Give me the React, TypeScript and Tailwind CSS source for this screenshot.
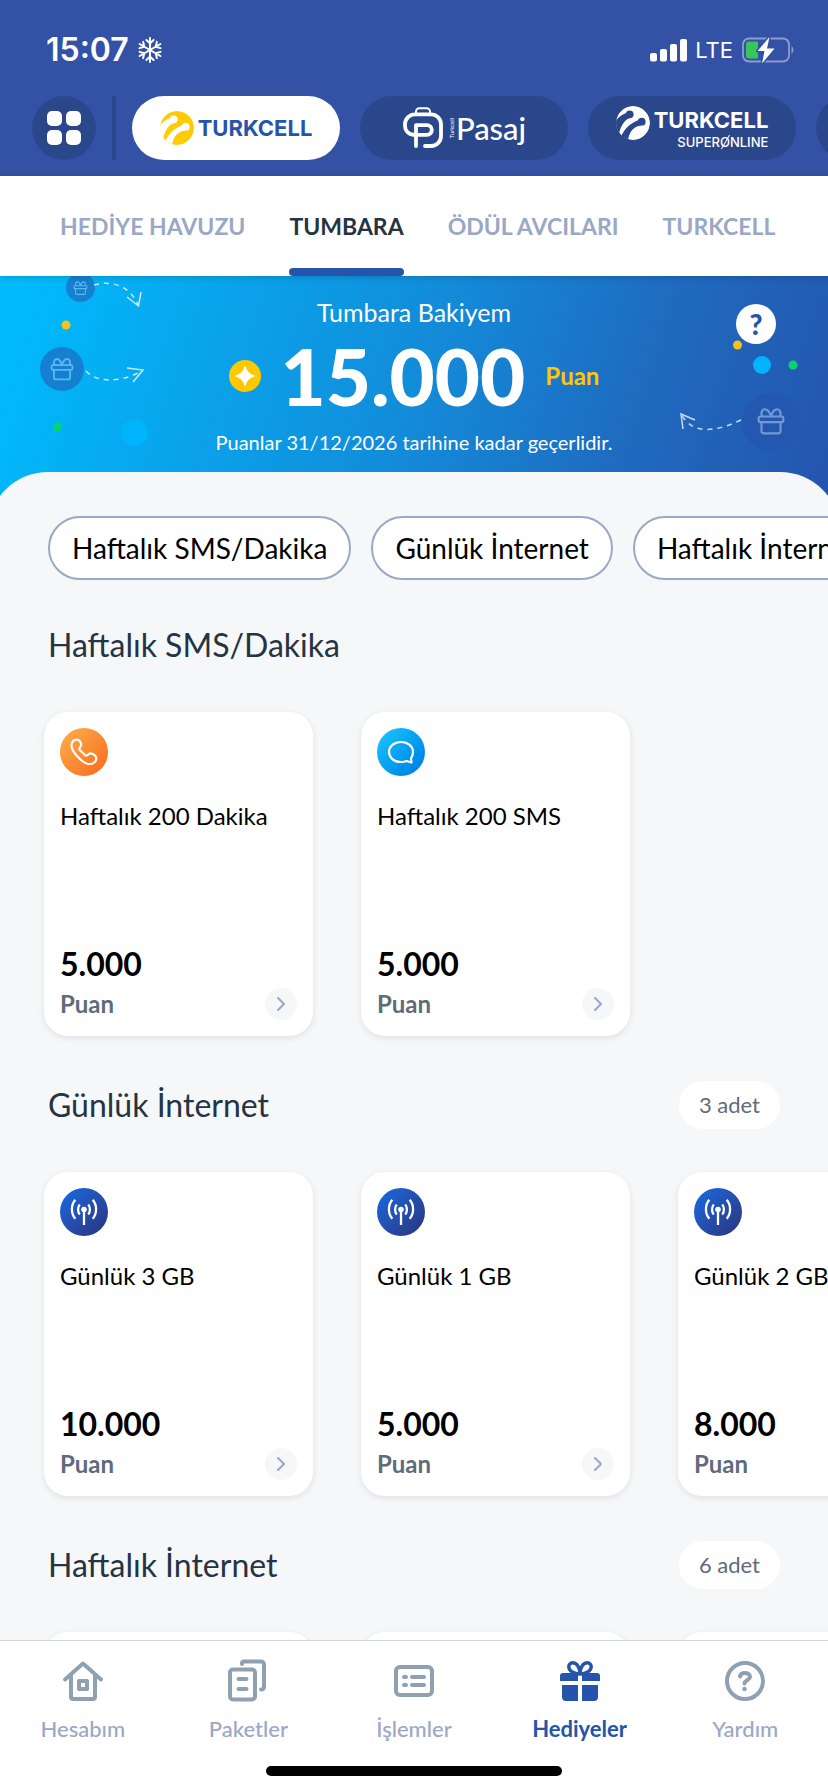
import React, { useState } from 'react';
import { ChevronRight } from 'lucide-react';

type CardIcon = 'phone' | 'sms' | 'antenna';

interface Reward {
  title: string;
  points: string;
  icon: CardIcon;
}

interface Section {
  title: string;
  count?: string;
  rewards: Reward[];
}

const tabs = ['HEDİYE HAVUZU', 'TUMBARA', 'ÖDÜL AVCILARI', 'TURKCELL'];

const filters = ['Haftalık SMS/Dakika', 'Günlük İnternet', 'Haftalık İnternet'];

const sections: Section[] = [
  {
    title: 'Haftalık SMS/Dakika',
    rewards: [
      { title: 'Haftalık 200 Dakika', points: '5.000', icon: 'phone' },
      { title: 'Haftalık 200 SMS', points: '5.000', icon: 'sms' },
    ],
  },
  {
    title: 'Günlük İnternet',
    count: '3 adet',
    rewards: [
      { title: 'Günlük 3 GB', points: '10.000', icon: 'antenna' },
      { title: 'Günlük 1 GB', points: '5.000', icon: 'antenna' },
      { title: 'Günlük 2 GB', points: '8.000', icon: 'antenna' },
    ],
  },
  {
    title: 'Haftalık İnternet',
    count: '6 adet',
    // still loading, shown as blank cards
    rewards: [],
  },
];

const TurkcellMark: React.FC<{ ball: string; cut: string }> = ({ ball, cut }) => (
  <svg viewBox="0 0 34 34" className="size-[34px] shrink-0" aria-hidden="true">
    <clipPath id="mark-clip">
      <circle cx="17" cy="17" r="17" />
    </clipPath>
    <g clipPath="url(#mark-clip)">
      <circle cx="17" cy="17" r="17" fill={ball} />
      <g fill={cut}>
        <circle cx="13.7" cy="8.3" r="3.9" />
        <path d="M15.5 11.6C9.5 13 5 18.5 3 28L-2 28L-1 15.5C3 10.5 7 8 11.5 6.5Z" />
        <circle cx="25.7" cy="15.7" r="3.9" />
        <path d="M25 19.4C18.5 20 13.5 24.5 12 34L5 31C8 23 14 17.5 22.5 14Z" />
      </g>
    </g>
  </svg>
);

const PasajMark = () => (
  <svg viewBox="0 0 42 42" className="size-[42px] shrink-0" fill="none" stroke="#fff" strokeLinecap="round" strokeLinejoin="round" aria-hidden="true">
    <path strokeWidth="3.8" d="M11.5 27.7A8.7 8.7 0 0 1 3 19v-2A10 10 0 0 1 13 7.3h16a10 10 0 0 1 10 10V29a10 10 0 0 1-10 10h-6" />
    <path strokeWidth="3.8" d="M14 39V18.2h11a4.8 4.8 0 0 1 0 9.6H11.5" />
    <path strokeWidth="2" d="M14 6V4.5A3.3 3.3 0 0 1 17.3 1.2h7.4A3.3 3.3 0 0 1 28 4.5V6" />
  </svg>
);

const StatusBar = () => (
  <div className="flex h-24 items-center justify-between pt-1 pr-[33px] pl-[46px]">
    <div className="flex items-center gap-2">
      <span className="font-['Inter'] text-[32px] leading-10 font-semibold">15:07</span>
      <svg viewBox="-13 -13 26 26" className="size-[26px]" fill="none" stroke="#fff" strokeWidth="2" strokeLinecap="round" aria-hidden="true">
        {[0, 60, 120, 180, 240, 300].map((deg) => (
          <path key={deg} transform={`rotate(${deg})`} d="M0 0V-12M-3.6 -10L0 -6.6L3.6 -10" />
        ))}
      </svg>
    </div>
    <div className="flex items-center gap-2">
      <svg viewBox="0 0 37 24" className="h-6 w-[37px]" fill="#fff" aria-hidden="true">
        <rect x="0" y="15" width="7" height="8.5" rx="2" />
        <rect x="10" y="11" width="7" height="12.5" rx="2" />
        <rect x="20" y="6" width="7" height="17.5" rx="2" />
        <rect x="30" y="1" width="7" height="22.5" rx="2" />
      </svg>
      <span className="font-['Inter'] text-[22px] leading-8">LTE</span>
      <svg viewBox="0 0 54 28" className="h-7 w-[54px]" aria-hidden="true">
        <rect x="2" y="2.5" width="46" height="23" rx="6" fill="none" stroke="#8e9dcc" strokeWidth="1.8" />
        <path d="M50.5 10a5 5 0 0 1 0 8z" fill="#8e9dcc" />
        <path d="M8 5.5h9v17H8a3 3 0 0 1-3-3v-11a3 3 0 0 1 3-3z" fill="#35c759" />
        <path d="M28.5 1L16.5 15h7L21 27.5L33.5 12.5h-7.5z" fill="#fff" stroke="#3352a5" strokeWidth="3" strokeLinejoin="round" />
        <path d="M28.5 1L16.5 15h7L21 27.5L33.5 12.5h-7.5z" fill="#fff" />
      </svg>
    </div>
  </div>
);

const BrandBar = () => (
  <div className="flex h-20 items-start gap-4 overflow-hidden pl-8">
    <button type="button" aria-label="Menü" className="flex size-16 shrink-0 items-center justify-center rounded-full bg-[#2b478c]">
      <span className="grid grid-cols-2 gap-1">
        <span className="size-[15px] rounded-[5px] bg-white" />
        <span className="size-[15px] rounded-[5px] bg-white" />
        <span className="size-[15px] rounded-[5px] bg-white" />
        <span className="size-[15px] rounded-[5px] bg-white" />
      </span>
    </button>
    <span className="h-16 w-1 shrink-0 bg-[#2b478c]" />
    <div className="flex gap-5">
      <button type="button" className="flex h-16 w-52 shrink-0 items-center justify-center gap-1 rounded-full bg-white">
        <TurkcellMark ball="#ffcb05" cut="#ffffff" />
        <span className="font-['Inter'] text-[22px] leading-7 font-bold text-[#2554ab]">TURKCELL</span>
      </button>
      <button type="button" className="flex h-16 w-52 shrink-0 items-center justify-center rounded-full bg-[#2b478c]">
        <PasajMark />
        <span className="ml-1 rotate-180 font-['Lato'] text-[6px] leading-2 [writing-mode:vertical-rl]">Turkcell</span>
        <span className="font-['Lato'] text-[31px] leading-10 font-medium">Pasaj</span>
      </button>
      <button type="button" className="flex h-16 w-52 shrink-0 items-start justify-center gap-1 rounded-full bg-[#2b478c] pt-[10px]">
        <TurkcellMark ball="#ffffff" cut="#2b478c" />
        <span className="flex flex-col items-end">
          <span className="font-['Inter'] text-[22px] leading-7 font-bold">TURKCELL</span>
          <span className="font-['Inter'] text-[13px] leading-4 font-medium">
            SUPER
            <span className="relative">
              O
              <span className="absolute inset-y-0 left-1/2 w-px rotate-[30deg] bg-white" />
            </span>
            NLINE
          </span>
        </span>
      </button>
      <button type="button" aria-label="Diğer" className="h-16 w-52 shrink-0 rounded-full bg-[#2b478c]" />
    </div>
  </div>
);

const GiftOutline: React.FC<{ x: number; y: number; scale: number; color: string }> = ({ x, y, scale, color }) => (
  <g transform={`translate(${x} ${y}) scale(${scale})`} fill="none" stroke={color} strokeWidth="1.9" strokeLinejoin="round">
    <rect x="-11" y="-4" width="22" height="5" rx="1.5" />
    <path d="M-8.5 1V9a2 2 0 0 0 2 2H6.5a2 2 0 0 0 2-2V1" />
    <path d="M-8 -4C-9.5 -8 -7.5 -10.5 -5.5 -10.5C-3 -10.5 -1 -7.5 0 -4C1 -7.5 3 -10.5 5.5 -10.5C7.5 -10.5 9.5 -8 8 -4" />
  </g>
);

const Hero = () => (
  <section className="relative flex h-[260px] flex-col items-center overflow-hidden bg-[linear-gradient(108deg,#00bafc_3%,#138bd9_50%,#1f6abf_75%,#2456af_97%)] pt-5 text-white">
    <svg viewBox="0 0 200 200" className="absolute top-0 left-0 size-[200px]" fill="none" aria-hidden="true">
      <circle cx="80.5" cy="11.5" r="14.5" fill="#1580d0" />
      <GiftOutline x={80.5} y={12} scale={0.58} color="#5cb8ee" />
      <circle cx="66" cy="49" r="4.5" fill="#f2c21a" />
      <circle cx="62" cy="93" r="22" fill="#1580d0" />
      <GiftOutline x={62} y={93} scale={0.95} color="#5cb8ee" />
      <circle cx="57.5" cy="151" r="4.5" fill="#05d471" />
      <circle cx="134.5" cy="157" r="13.5" fill="#00b4fb" />
      <g stroke="#c9eafc" strokeWidth="1.5">
        <path d="M94 9C112 4 130 10 138 29" strokeDasharray="5 5" />
        <path d="M127 21L138.5 30L141 16" />
        <path d="M86 95C98 108 122 106 142 95" strokeDasharray="5 5" />
        <path d="M127 92L143 94L133 106" />
      </g>
    </svg>
    <svg viewBox="0 0 200 200" className="absolute top-0 right-0 size-[200px]" fill="none" aria-hidden="true">
      <circle cx="109.5" cy="69" r="4.5" fill="#f2c21a" />
      <circle cx="134" cy="89" r="9" fill="#00b4fb" />
      <circle cx="165" cy="89" r="4.5" fill="#05d471" />
      <circle cx="143" cy="146" r="29" fill="#2458b0" />
      <GiftOutline x={143} y={145} scale={1.12} color="#7399d2" />
      <g stroke="#c9ddf2" strokeWidth="1.5">
        <path d="M113 144C85 157 64 158 53 138" strokeDasharray="5 5" />
        <path d="M55 153L53 138L67 144" />
      </g>
    </svg>
    <button
      type="button"
      aria-label="Yardım"
      className="absolute top-7 right-[52px] flex size-10 items-center justify-center rounded-full bg-white font-['Lato'] text-[28px] leading-8 font-black text-[#2554ab]"
    >
      ?
    </button>
    <h1 className="text-[25px] leading-8">Tumbara Bakiyem</h1>
    <div className="flex h-24 items-center gap-5">
      <svg viewBox="0 0 32 32" className="size-8" aria-hidden="true">
        <circle cx="16" cy="16" r="16" fill="#ffc800" />
        <path d="M16 6.5C17.5 11.5 20.5 14.5 25.5 16C20.5 17.5 17.5 20.5 16 25.5C14.5 20.5 11.5 17.5 6.5 16C11.5 14.5 14.5 11.5 16 6.5Z" fill="#fff" stroke="#fff" strokeLinejoin="round" />
      </svg>
      <strong className="text-[78px] leading-none font-black">15.000</strong>
      <span className="text-[24px] leading-8 font-bold text-[#ffc800]">Puan</span>
    </div>
    <p className="text-[20px] leading-9">Puanlar 31/12/2026 tarihine kadar geçerlidir.</p>
  </section>
);

const RewardIcon: React.FC<{ icon: CardIcon }> = ({ icon }) => {
  if (icon === 'phone') {
    return (
      <span className="flex size-12 items-center justify-center rounded-full bg-linear-to-br from-[#fbb04a] to-[#f9661b]">
        <svg viewBox="0 0 28 28" className="size-7" fill="none" stroke="#fff" strokeWidth="2.2" strokeLinejoin="round" aria-hidden="true">
          <path d="M2.5 3.8C4.5 1 8 .8 9.8 3.2C11.5 5.5 11.8 7.5 9.8 9.5C9 10.5 9.3 11.3 10 12.2L15 17C16 17.8 16.8 17.8 17.6 17C19.5 15 22 15.2 24.3 16.9C26.8 18.7 27 21.5 24.8 24C21.5 27.3 16 26.5 10.5 21.5C4 15.5 -.5 8.5 2.5 3.8Z" />
        </svg>
      </span>
    );
  }
  if (icon === 'sms') {
    return (
      <span className="flex size-12 items-center justify-center rounded-full bg-linear-to-br from-[#1fc8ff] to-[#0079e2]">
        <svg viewBox="0 0 28 28" className="size-7" fill="none" stroke="#fff" strokeWidth="2.2" strokeLinejoin="round" aria-hidden="true">
          <path d="M14 4C21 4 26 8.5 26 14C26 16.5 25.2 18.5 24 20.3L24.5 24.5L19.5 23C18 23.7 16 24 14 24C7 24 2 19.5 2 14S7 4 14 4Z" />
        </svg>
      </span>
    );
  }
  return (
    <span className="flex size-12 items-center justify-center rounded-full bg-linear-to-br from-[#0c6be6] to-[#28347a]">
      <svg viewBox="0 0 28 28" className="size-7" fill="none" stroke="#fff" strokeWidth="2.3" aria-hidden="true">
        <circle cx="14" cy="11.5" r="2.8" fill="#fff" stroke="none" />
        <path d="M14 12V27M9.8 6.5C7.5 9 7.5 14 9.8 16.5M18.2 6.5C20.5 9 20.5 14 18.2 16.5M5.3 1.8C.8 7 .8 15.5 5.3 20.7M22.7 1.8C27.2 7 27.2 15.5 22.7 20.7" />
      </svg>
    </span>
  );
};

const RewardCard: React.FC<{ reward?: Reward }> = ({ reward }) => (
  <article className="flex h-[324px] w-[269px] shrink-0 flex-col rounded-3xl bg-white p-4 shadow-[0_2px_6px_rgba(30,40,60,0.10)]">
    {reward && (
      <>
        <RewardIcon icon={reward.icon} />
        <h3 className="mt-6 text-[24px] leading-8 whitespace-nowrap text-black">{reward.title}</h3>
        <strong className="mt-auto text-[32px] leading-10 font-bold text-black">{reward.points}</strong>
        <div className="mt-1 flex h-8 items-center justify-between">
          <span className="text-[24px] leading-8 font-bold text-[#5f6b7a]">Puan</span>
          <button type="button" aria-label="Detay" className="flex size-8 items-center justify-center rounded-full bg-[#f5f7f9]">
            <ChevronRight className="size-6 text-[#9aa7c5]" strokeWidth={2} />
          </button>
        </div>
      </>
    )}
  </article>
);

const RewardSection: React.FC<{ section: Section }> = ({ section }) => (
  <section className="mt-10">
    <div className="flex h-[50px] items-center justify-between pr-12 pl-12">
      <h2 className="text-[32px] leading-10 text-[#253343]">{section.title}</h2>
      {section.count && (
        <span className="flex h-12 items-center rounded-full bg-white px-5 text-[22px] leading-8 text-[#5f6b7a]">{section.count}</span>
      )}
    </div>
    <div className="mt-[38px] -mb-1 flex gap-12 overflow-hidden pt-1 pb-2 pl-11">
      {section.rewards.length > 0
        ? section.rewards.map((reward) => <RewardCard key={reward.title} reward={reward} />)
        : [0, 1, 2].map((i) => <RewardCard key={i} />)}
    </div>
  </section>
);

const navItems = [
  {
    label: 'Hesabım',
    icon: (
      <>
        <path d="M6 22.5L24 6.5L42 22.5" />
        <path d="M12 19V40a2 2 0 0 0 2 2H34a2 2 0 0 0 2-2V19" />
        <rect x="20" y="24" width="8" height="8" />
      </>
    ),
  },
  {
    label: 'Paketler',
    icon: (
      <>
        <rect x="6" y="12.5" width="25" height="30" rx="3" />
        <path d="M18 7V6.5a2 2 0 0 1 2-2H37a3 3 0 0 1 3 3V30a2.5 2.5 0 0 1-2.5 2.5H37" />
        <path d="M14.5 22H22.5M14.5 32H22.5" />
      </>
    ),
  },
  {
    label: 'İşlemler',
    icon: (
      <>
        <rect x="6" y="10" width="36" height="28" rx="4" />
        <path d="M14 20H16M22 20H34M14 28H16M22 28H34" />
      </>
    ),
  },
  {
    label: 'Hediyeler',
    icon: (
      <>
        <path d="M7 16H22V24H4V19A3 3 0 0 1 7 16ZM26 16H41A3 3 0 0 1 44 19V24H26ZM6 28H22V44H10A4 4 0 0 1 6 40ZM26 28H42V40A4 4 0 0 1 38 44H26Z" fill="currentColor" stroke="none" />
        <path strokeWidth="3.5" d="M24 17C24 10 20.5 5.8 16.5 5.8A3.8 3.8 0 0 0 12.8 10C13 14 18 17 24 17C24 10 27.5 5.8 31.5 5.8A3.8 3.8 0 0 1 35.2 10C35 14 30 17 24 17" />
      </>
    ),
  },
  {
    label: 'Yardım',
    icon: (
      <>
        <circle cx="24" cy="24" r="18" />
        <path d="M19 19.5C19.5 17 21.5 16 24 16C27 16 29 17.5 29 20C29 23 24 23 23.5 26.5" />
        <circle cx="23.5" cy="32" r="2.3" fill="currentColor" stroke="none" />
      </>
    ),
  },
];

const App: React.FC = () => {
  const [activeTab, setActiveTab] = useState('TUMBARA');
  const [activeNav, setActiveNav] = useState('Hediyeler');

  return (
    <div className="flex h-screen flex-col overflow-hidden bg-[#f5f7f9] font-['Lato',sans-serif]">
      <header className="shrink-0 bg-[#3352a5] text-white">
        <StatusBar />
        <BrandBar />
      </header>

      <nav className="relative z-10 flex h-[100px] shrink-0 gap-11 overflow-hidden bg-white pl-[60px] shadow-[0_2px_6px_rgba(0,0,0,0.15)]">
        {tabs.map((tab) => (
          <button
            key={tab}
            type="button"
            onClick={() => setActiveTab(tab)}
            className={`flex shrink-0 flex-col justify-between pt-[34px] text-[23px] leading-8 font-bold ${
              tab === activeTab ? 'text-[#253343]' : 'text-[#9aa7c5]'
            }`}
          >
            {tab}
            <span className={`h-2 w-full rounded-full ${tab === activeTab ? 'bg-[#2554ab]' : 'bg-transparent'}`} />
          </button>
        ))}
      </nav>

      <main className="min-h-0 flex-1 overflow-hidden">
        <Hero />
        <div className="relative -mx-3 -mt-16 rounded-t-[60px] bg-[#f5f7f9] px-3 pt-11">
          <div className="-mr-3 flex gap-5 overflow-hidden pl-12">
            {filters.map((filter) => (
              <button
                key={filter}
                type="button"
                className="h-16 shrink-0 rounded-full border-2 border-[#9aa7c5] bg-white px-[22px] text-[28px] leading-8 text-black"
              >
                {filter}
              </button>
            ))}
          </div>
          {sections.map((section) => (
            <RewardSection key={section.title} section={section} />
          ))}
        </div>
      </main>

      <footer className="shrink-0 border-t border-[#d5d7da] bg-white">
        <nav className="grid grid-cols-5 pt-4">
          {navItems.map((item) => (
            <a
              key={item.label}
              href="#"
              onClick={() => setActiveNav(item.label)}
              className={`flex flex-col items-center gap-2 text-[22px] leading-8 ${
                item.label === activeNav ? 'font-bold text-[#2554ab]' : 'font-medium text-[#9aa7c5]'
              }`}
            >
              <svg
                viewBox="0 0 48 48"
                className={`size-12 ${item.label === activeNav ? 'text-[#2554ab]' : 'text-[#8fa1b1]'}`}
                fill="none"
                stroke="currentColor"
                strokeWidth="4"
                strokeLinecap="round"
                strokeLinejoin="round"
                aria-hidden="true"
              >
                {item.icon}
              </svg>
              {item.label}
            </a>
          ))}
        </nav>
        <div className="mx-auto mt-[21px] mb-4 h-[10px] w-[296px] rounded-full bg-black" />
      </footer>
    </div>
  );
};

export default App;
